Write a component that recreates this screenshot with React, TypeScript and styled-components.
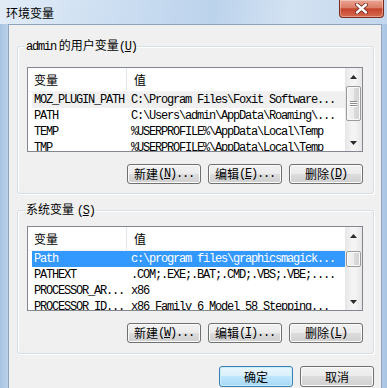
import styled, { createGlobalStyle } from "styled-components";

const GlobalStyle = createGlobalStyle`
  html, body {
    margin: 0;
    padding: 0;
  }
  body {
    background: #fff;
    font-family: "Noto Sans CJK SC", sans-serif;
    font-size: 12px;
    color: #000;
  }
`;

const Window = styled.div`
  width: 387px;
  height: 388px;
  overflow: hidden;
  display: flex;
  flex-direction: column;
  background: linear-gradient(90deg, #a8c3e3 0%, #c4d8ee 3%, #c9dcf0 50%, #bed3eb 97%, #a8c3e3 100%);
`;

const TitleBar = styled.div`
  height: 24px;
  flex: none;
  display: flex;
  align-items: flex-start;
  background: linear-gradient(100deg, #e2ecf7 0%, #cfe0f2 25%, #bcd3ec 55%, #d3e2f2 75%, #c2d6ed 100%);
`;

const Title = styled.div`
  font-family: "Noto Sans CJK SC", sans-serif;
  font-size: 12px;
  line-height: 14px;
  margin: 6px 0 0 6px;
`;

const CloseButton = styled.div`
  margin-left: auto;
  margin-right: 3px;
  width: 45px;
  height: 18px;
  box-sizing: border-box;
  border: 1px solid #7d2a1c;
  border-top: none;
  border-radius: 0 0 4px 4px;
  background: linear-gradient(#eba594 0%, #db7d66 45%, #c4442b 52%, #d66a4e 100%);
  box-shadow: inset 0 0 0 1px rgba(255, 255, 255, 0.35);
  display: flex;
  align-items: center;
  justify-content: center;
`;

const Body = styled.div`
  flex: 1;
  display: flex;
  padding: 0 5px 0 8px;
  min-height: 0;
`;

const Client = styled.div`
  flex: 1;
  background: #f0f0f0;
  border: 1px solid #8ea4bd;
  border-bottom: none;
  padding: 13px 7px 0 8px;
  box-sizing: border-box;
`;

const Group = styled.fieldset<{ $top: number; $bottom: number }>`
  margin: 0;
  min-width: 0;
  border: 1px solid #d5dfe5;
  border-radius: 3px;
  box-shadow: inset 1px 1px 0 #fff, 1px 1px 0 #fff;
  padding: ${(p) => p.$top}px 10px ${(p) => p.$bottom}px 9px;

  & + & {
    margin-top: 8px;
  }
`;

const Legend = styled.legend`
  padding: 0 1px;
  margin-left: -2px;
  font-size: 12px;
  line-height: 14px;
`;

const Lat = styled.span`
  font-family: "Liberation Mono", monospace;
  font-size: 12px;
  letter-spacing: -1.2px;
`;

const List = styled.div`
  height: 85px;
  box-sizing: border-box;
  border: 1px solid #828790;
  background: #fff;
  display: flex;
  overflow: hidden;
`;

const ListBody = styled.div`
  flex: 1;
  min-width: 0;
`;

const Header = styled.div`
  display: flex;
  height: 24px;
  box-sizing: border-box;
  border-bottom: 1px solid #f2f3f5;
  line-height: 23px;
  font-size: 12px;
`;

const HeadCell = styled.div<{ $w?: number }>`
  ${(p) => (p.$w ? `width: ${p.$w}px; flex: none; border-right: 1px solid #e3e8ee;` : "flex: 1;")}
  padding-left: ${(p) => (p.$w ? 6 : 7)}px;
  box-sizing: border-box;
`;

const Row = styled.div<{ $sel?: "gray" | "blue" }>`
  display: flex;
  height: 16px;
  line-height: 16px;
  margin-left: 4px;
  font-family: "Liberation Mono", monospace;
  font-size: 12px;
  letter-spacing: -1.2px;
  white-space: nowrap;
  background: ${(p) => (p.$sel === "blue" ? "#3399ff" : p.$sel === "gray" ? "#f0f0f0" : "transparent")};
  color: ${(p) => (p.$sel === "blue" ? "#fff" : "#000")};
`;

const Cell = styled.div<{ $w?: number }>`
  ${(p) => (p.$w ? `width: ${p.$w}px; flex: none;` : "flex: 1; min-width: 0;")}
  padding-left: ${(p) => (p.$w ? 2 : 4)}px;
  box-sizing: border-box;
  overflow: hidden;
`;

const ScrollBar = styled.div`
  width: 17px;
  flex: none;
  display: flex;
  flex-direction: column;
  background: linear-gradient(90deg, #e6e6e6 0%, #f4f4f4 40%, #f4f4f4 60%, #e6e6e6 100%);
`;

const ArrowBtn = styled.div`
  height: 17px;
  flex: none;
  display: flex;
  align-items: center;
  justify-content: center;
`;

const Track = styled.div`
  flex: 1;
  display: flex;
  flex-direction: column;
`;

const Thumb = styled.div<{ $off: number; $h: number }>`
  margin: ${(p) => p.$off}px 1px 0 1px;
  height: ${(p) => p.$h}px;
  box-sizing: border-box;
  border: 1px solid #9b9b9b;
  border-radius: 2px;
  background: linear-gradient(90deg, #f4f4f4 0%, #ececec 50%, #dcdcdc 51%, #d2d2d2 100%);
  box-shadow: inset 0 0 0 1px #fafafa;
  display: flex;
  flex-direction: column;
  align-items: center;
  justify-content: center;
  gap: 1px;
`;

const Grip = styled.div`
  width: 7px;
  height: 1px;
  background: #8b8b8b;
  box-shadow: 0 1px 0 #fff;
`;

const ButtonRow = styled.div<{ $mt: number }>`
  display: flex;
  justify-content: flex-end;
  gap: 7px;
  margin-top: ${(p) => p.$mt}px;
`;

const Button = styled.div<{ $h: number; $default?: boolean }>`
  width: 74px;
  height: ${(p) => p.$h}px;
  box-sizing: border-box;
  border: 1px solid ${(p) => (p.$default ? "#3c7fb1" : "#707070")};
  border-radius: 3px;
  background: ${(p) =>
    p.$default
      ? "linear-gradient(#eaf6fd 0%, #d9f0fc 48%, #bee6fd 50%, #a7d9f5 100%)"
      : "linear-gradient(#f2f2f2 0%, #ebebeb 48%, #dddddd 50%, #cfcfcf 100%)"};
  box-shadow: inset 0 0 0 1px ${(p) => (p.$default ? "#c8ecfc" : "#fbfbfb")};
  display: flex;
  align-items: center;
  justify-content: center;
  font-size: 12px;
  line-height: 14px;
  white-space: nowrap;
`;

type Pair = [string, string];

const userVars: Pair[] = [
  ["MOZ_PLUGIN_PATH", "C:\\Program Files\\Foxit Software..."],
  ["PATH", "C:\\Users\\admin\\AppData\\Roaming\\..."],
  ["TEMP", "%USERPROFILE%\\AppData\\Local\\Temp"],
  ["TMP", "%USERPROFILE%\\AppData\\Local\\Temp"],
];

const sysVars: Pair[] = [
  ["Path", "c:\\program files\\graphicsmagick..."],
  ["PATHEXT", ".COM;.EXE;.BAT;.CMD;.VBS;.VBE;...."],
  ["PROCESSOR_AR...", "x86"],
  ["PROCESSOR_ID...", "x86 Family 6 Model 58 Stepping..."],
];

const Arrow = ({ up }: { up?: boolean }) => (
  <svg width="7" height="4" viewBox="0 0 7 4">
    <path d={up ? "M0 4 L3.5 0 L7 4 Z" : "M0 0 L3.5 4 L7 0 Z"} fill="#2b2b2b" />
  </svg>
);

const VarList = ({
  rows,
  sel,
  thumbOff,
  thumbH,
}: {
  rows: Pair[];
  sel: "gray" | "blue";
  thumbOff: number;
  thumbH: number;
}) => (
  <List>
    <ListBody>
      <Header>
        <HeadCell $w={99}>变量</HeadCell>
        <HeadCell>值</HeadCell>
      </Header>
      {rows.map(([k, v], i) => (
        <Row key={k} $sel={i === 0 ? sel : undefined}>
          <Cell $w={95}>{k}</Cell>
          <Cell>{v}</Cell>
        </Row>
      ))}
    </ListBody>
    <ScrollBar>
      <ArrowBtn>
        <Arrow up />
      </ArrowBtn>
      <Track>
        <Thumb $off={thumbOff} $h={thumbH}>
          {thumbH > 20 && (
            <>
              <Grip />
              <Grip />
              <Grip />
            </>
          )}
        </Thumb>
      </Track>
      <ArrowBtn>
        <Arrow />
      </ArrowBtn>
    </ScrollBar>
  </List>
);

const Key = ({ k, dots }: { k: string; dots?: boolean }) => (
  <Lat>
    (<u>{k}</u>){dots ? "..." : ""}
  </Lat>
);

export default function App() {
  return (
    <>
      <GlobalStyle />
      <Window>
        <TitleBar>
          <Title>环境变量</Title>
          <CloseButton>
            <svg width="13" height="11" viewBox="0 0 13 11">
              <path d="M2 1.5 L11 9.5 M11 1.5 L2 9.5" stroke="#6a2418" strokeWidth="4" strokeLinecap="round" />
              <path d="M2 1.5 L11 9.5 M11 1.5 L2 9.5" stroke="#fff" strokeWidth="2.4" strokeLinecap="round" />
            </svg>
          </CloseButton>
        </TitleBar>
        <Body>
          <Client>
            <Group $top={13} $bottom={9}>
              <Legend>
                <Lat>admin</Lat> 的用户变量<Key k="U" />
              </Legend>
              <VarList rows={userVars} sel="gray" thumbOff={1} thumbH={35} />
              <ButtonRow $mt={12}>
                <Button $h={20}>
                  新建 <Key k="N" dots />
                </Button>
                <Button $h={20}>
                  编辑 <Key k="E" dots />
                </Button>
                <Button $h={20}>
                  删除 <Key k="D" />
                </Button>
              </ButtonRow>
            </Group>
            <Group $top={8} $bottom={10}>
              <Legend>
                系统变量 <Key k="S" />
              </Legend>
              <VarList rows={sysVars} sel="blue" thumbOff={7} thumbH={16} />
              <ButtonRow $mt={12}>
                <Button $h={20}>
                  新建 <Key k="W" dots />
                </Button>
                <Button $h={20}>
                  编辑 <Key k="I" dots />
                </Button>
                <Button $h={20}>
                  删除 <Key k="L" />
                </Button>
              </ButtonRow>
            </Group>
            <ButtonRow $mt={12}>
              <Button $h={21} $default>
                确定
              </Button>
              <Button $h={21}>取消</Button>
            </ButtonRow>
          </Client>
        </Body>
      </Window>
    </>
  );
}
